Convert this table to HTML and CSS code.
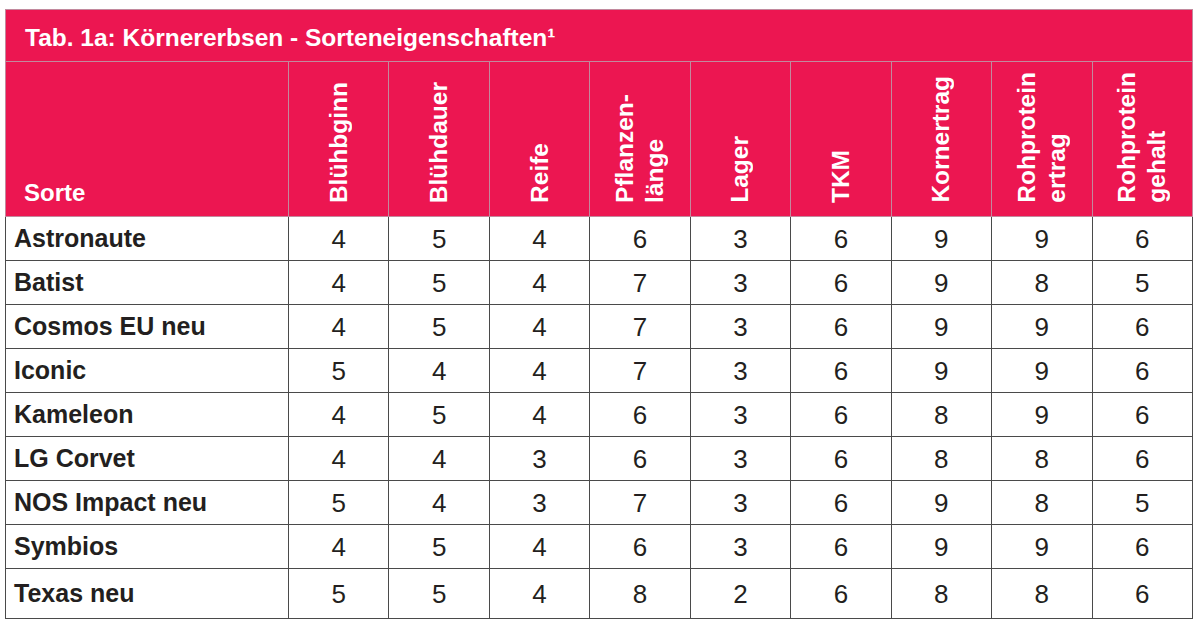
FILE: index.html
```html
<!DOCTYPE html>
<html lang="de">
<head>
<meta charset="utf-8">
<title>Tab. 1a: Körnererbsen - Sorteneigenschaften</title>
<link rel="stylesheet" href="styles.css">
</head>
<body>
<div class="wrap">
<table class="sorten">
  <colgroup>
    <col class="c-name">
    <col span="9">
  </colgroup>
  <thead>
    <tr class="title-row">
      <th colspan="10" class="title">Tab. 1a: Körnererbsen - Sorteneigenschaften¹</th>
    </tr>
    <tr class="head-row">
      <th class="h-sorte">Sorte</th>
      <th class="h-rot"><span>Blühbginn</span></th>
      <th class="h-rot"><span>Blühdauer</span></th>
      <th class="h-rot"><span>Reife</span></th>
      <th class="h-rot"><span>Pflanzen-<br>länge</span></th>
      <th class="h-rot"><span>Lager</span></th>
      <th class="h-rot"><span>TKM</span></th>
      <th class="h-rot"><span>Kornertrag</span></th>
      <th class="h-rot"><span>Rohprotein<br>ertrag</span></th>
      <th class="h-rot"><span>Rohprotein<br>gehalt</span></th>
    </tr>
  </thead>
  <tbody>
    <tr><th>Astronaute</th><td>4</td><td>5</td><td>4</td><td>6</td><td>3</td><td>6</td><td>9</td><td>9</td><td>6</td></tr>
    <tr><th>Batist</th><td>4</td><td>5</td><td>4</td><td>7</td><td>3</td><td>6</td><td>9</td><td>8</td><td>5</td></tr>
    <tr><th>Cosmos EU neu</th><td>4</td><td>5</td><td>4</td><td>7</td><td>3</td><td>6</td><td>9</td><td>9</td><td>6</td></tr>
    <tr><th>Iconic</th><td>5</td><td>4</td><td>4</td><td>7</td><td>3</td><td>6</td><td>9</td><td>9</td><td>6</td></tr>
    <tr><th>Kameleon</th><td>4</td><td>5</td><td>4</td><td>6</td><td>3</td><td>6</td><td>8</td><td>9</td><td>6</td></tr>
    <tr><th>LG Corvet</th><td>4</td><td>4</td><td>3</td><td>6</td><td>3</td><td>6</td><td>8</td><td>8</td><td>6</td></tr>
    <tr><th>NOS Impact neu</th><td>5</td><td>4</td><td>3</td><td>7</td><td>3</td><td>6</td><td>9</td><td>8</td><td>5</td></tr>
    <tr><th>Symbios</th><td>4</td><td>5</td><td>4</td><td>6</td><td>3</td><td>6</td><td>9</td><td>9</td><td>6</td></tr>
    <tr class="last"><th>Texas neu</th><td>5</td><td>5</td><td>4</td><td>8</td><td>2</td><td>6</td><td>8</td><td>8</td><td>6</td></tr>
  </tbody>
</table>
</div>
</body>
</html>
```

FILE: styles.css
```css
html, body {
  margin: 0;
  padding: 0;
  background: #ffffff;
}

body {
  font-family: "Liberation Sans", Arial, Helvetica, sans-serif;
  color: #231f20;
}

.wrap {
  padding: 9px 0 0 5px;
}

.sorten {
  width: 1188px;
  border-collapse: collapse;
  table-layout: fixed;
}

.c-name {
  width: 283px;
}

.sorten thead th {
  background: #ec1651;
  color: #ffffff;
  border: 1px solid #c2899d;
  font-weight: bold;
  padding: 0;
}

.title-row {
  height: 52px;
}

.sorten thead th.title {
  text-align: left;
  font-size: 24.5px;
  padding: 5px 0 0 19px;
  vertical-align: middle;
}

.head-row {
  height: 155px;
}

.sorten thead th.h-sorte {
  text-align: left;
  vertical-align: bottom;
  font-size: 24px;
  padding: 0 0 9px 18px;
}

.sorten thead th.h-rot {
  vertical-align: bottom;
  text-align: center;
  font-size: 24.5px;
  padding-bottom: 7px;
}

.h-rot span {
  display: inline-block;
  writing-mode: vertical-rl;
  transform: rotate(180deg);
  text-align: left;
  line-height: 30px;
  white-space: nowrap;
}

.sorten tbody tr {
  height: 44px;
}

.sorten tbody tr.last {
  height: 50px;
}

.sorten tbody th,
.sorten tbody td {
  border: 1px solid #4a4a4a;
  padding: 0;
  vertical-align: middle;
}

.sorten tbody th {
  text-align: left;
  font-weight: bold;
  font-size: 25px;
  padding-left: 8px;
}

.sorten tbody td {
  text-align: center;
  font-size: 26px;
  padding-top: 1px;
}
```
